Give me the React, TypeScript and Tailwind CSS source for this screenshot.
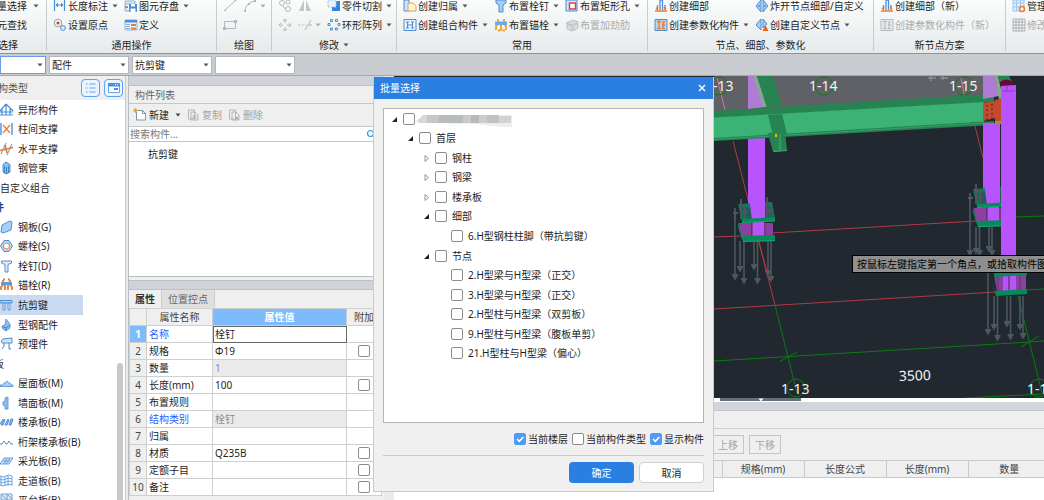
import type { ReactNode } from 'react';

const BLUE = '#4a8fd6';
const ORANGE = '#f0782a';
const GRAY = '#b4b7ba';

function Icon({ children, className = '' }: { children: ReactNode; className?: string }) {
  return (
    <svg viewBox="0 0 14 14" fill="none" className={`size-3.5 shrink-0 ${className}`} aria-hidden="true">
      {children}
    </svg>
  );
}

const icons: Record<string, ReactNode> = {
  length: (
    <>
      <path d="M1.500 0v12M11.500 0v12M3 6h7" stroke={BLUE} strokeWidth="1.200" />
      <path d="M5 3.500 2.500 6 5 8.500zM8 3.500 10.500 6 8 8.500z" fill={BLUE} />
    </>
  ),
  origin: (
    <>
      <circle cx="5" cy="5" r="3.800" stroke="#7d8a96" strokeWidth=".8" />
      <circle cx="5" cy="5" r="1.500" fill="#d33a3a" />
      <circle cx="10" cy="10" r="2.400" stroke={BLUE} fill="#dbeafa" />
    </>
  ),
  save: (
    <>
      <path d="M1 2h10v3H1zM1 5v7h4" stroke="#8fb4dc" fill="#d8e8fa" />
      <path d="M5 5h8v8H5z" fill={BLUE} />
      <path d="M7 5h4v2.500H7zM6.500 9.500h5V13h-5z" fill="#fff" />
      <path d="M1 7h3v2H1z" fill={ORANGE} />
    </>
  ),
  define: (
    <>
      <path d="M1 2h12v10H1z" fill="#e7f0fb" stroke="#8fb4dc" />
      <path d="M1 2h12v2.500H1z" fill={BLUE} />
      <path d="M7 6h5v2H7zM7 9.500h5v2H7z" fill={ORANGE} />
      <path d="M2 6.500h4M2 8.500h4M2 10.500h4" stroke="#8fb4dc" />
    </>
  ),
  line: <path d="M2 11 12 2M1 11.500h2M11.500 1.500h2" stroke={GRAY} />,
  arc: (
    <>
      <path d="M2 12C3 6 6 3 12 2" stroke={GRAY} />
      <path d="M1 11h2v2H1zM5 4h2v2H5zM11 1h2v2h-2z" fill={GRAY} />
    </>
  ),
  rect: (
    <>
      <path d="M1.500 3.500h11v7h-11z" stroke={GRAY} />
      <path d="M11 2h3v3h-3zM0 9h3v3H0z" fill={GRAY} />
    </>
  ),
  copy: (
    <g stroke={GRAY}>
      <circle cx="4" cy="4" r="2.500" />
      <circle cx="10" cy="3" r="2" />
      <circle cx="10" cy="10" r="2.500" />
      <path d="m5 7 2 3" />
    </g>
  ),
  mirror: <path d="M6 1v11H1zM8 1v11h5z" fill="#c3c6c9" />,
  move: (
    <path d="M7 1v4M7 9v4M1 7h4M9 7h4M5 3l2-2 2 2M5 11l2 2 2-2M3 5 1 7l2 2M11 5l2 2-2 2" stroke={GRAY} />
  ),
  trim: <path d="M0 7h2M3.500 7h2M7 7h1M13 2 7 12M10 7h4" stroke={GRAY} />,
  cut: (
    <>
      <path d="M5 2h8v10H5z" fill="#2f86dc" />
      <path d="M1 1h8v7H1z" fill="#eaf3fc" stroke="#9fc4ec" strokeDasharray="2 1" />
    </>
  ),
  array: (
    <g stroke={BLUE}>
      <path d="M3.500 1.500h2v2h-2zM8.500 1.500h2v2h-2zM1 5.500h2v2H1zM11 5.500h2v2h-2zM3.500 10h2v2h-2zM8.500 10h2v2h-2z" />
    </g>
  ),
  belong: (
    <>
      <path d="M1 1h5v11H1z" fill="#cfe2f7" stroke={BLUE} />
      <path d="M5 4h5l3 3v5H5z" fill="#fff3df" stroke="#dba24f" />
    </>
  ),
  combo: (
    <>
      <path d="M1 1.500h12v11H1z" fill="#e9f2fc" stroke={BLUE} />
      <path d="M3 4h3M8 4h3M3 10h3M8 10h3M4.500 4v6M9.500 4v6M4.500 7h5" stroke={BLUE} />
    </>
  ),
  stud: <path d="M2 1h10v3L9 6v7H5V6L2 4z" fill="#a9cbf0" stroke={BLUE} />,
  anchor: (
    <>
      <path d="M4 1v5l-2 2v4M10 1v5l2 2v4M7 7v6M4 12.500h2M8.500 12.500H11" stroke="#f0a020" strokeWidth="1.800" />
      <path d="M1 3.500h12v3.500H1z" fill="#6aa8e8" />
    </>
  ),
  hole: (
    <>
      <path d="M1 1h11v11H1z" fill="#d5e6f8" stroke={BLUE} />
      <path d="M4.500 4h6v6h-6z" fill="#fff" stroke="#d94444" strokeWidth="1.500" />
    </>
  ),
  rib: (
    <path d="m1 5 7-3 5 2-6 3zM2 6l5 2v5l-5-2zM8 8l5-3v5l-5 3z" fill="#d9dbdd" stroke={GRAY} strokeWidth=".8" />
  ),
  detail: (
    <>
      <path d="M3.500 11V6M6 11V1h2.500v10M11 11V6" stroke={BLUE} strokeWidth="1.300" />
      <path d="M1 12h12M2 10l2-2M12 10l-2-2" stroke={ORANGE} strokeWidth="1.600" />
    </>
  ),
  param: (
    <>
      <path d="M1 1.500h12v11H1z" fill="#b7d5f5" stroke={BLUE} />
      <path d="M3 3.500h4M3 10.500h4M5 3.500v7M8 4h3M8 7h3M8 10.500h3M9 4v6" stroke={ORANGE} strokeWidth="1.300" />
    </>
  ),
  paramGray: (
    <>
      <path d="M1 1.500h12v11H1z" fill="#e7e9ea" stroke={GRAY} />
      <path d="M3 3.500h4M3 10.500h4M5 3.500v7M8 4h3M8 7h3M8 10.500h3M9 4v6" stroke={GRAY} />
    </>
  ),
  explode: (
    <>
      <path d="M6 1v12L1 7zM8 1v12l5-6z" fill="#a9cdf2" stroke={BLUE} />
      <path d="M3 7h2M9 7h2" stroke="#2b6cb0" />
    </>
  ),
  customNode: (
    <>
      <path d="M6 1v11L1 7zM8 1v9l4-4z" fill="#a9cdf2" stroke={BLUE} />
      <path d="m10.500 7 3 6h-6z" fill="#f0641e" />
    </>
  ),
  manage: (
    <>
      <path d="M1 1h11v11H1zM1 4h11M1 8h11M4.500 1v11M8.500 1v11" stroke="#9cc3ee" fill="#e1eefb" />
      <circle cx="10" cy="10" r="2.500" stroke={ORANGE} strokeWidth="1.500" fill="#fff" />
    </>
  ),
  grid: <path d="M1 1h12v12H1zM1 4h12M1 7h12M1 10h12M4 1v12M7 1v12M10 1v12" stroke="#9da1a5" strokeWidth=".8" />,
  // component tree
  special: (
    <path d="M6 1v11M6 1 0 8M6 1l7 7M2 6v6M10 6v6M0 12h13M0 9h13" stroke={BLUE} strokeWidth="1.200" />
  ),
  brace: (
    <>
      <path d="M1 1v12M12 1v12" stroke="#7db2ea" strokeWidth="2" />
      <path d="m3 3 7 8M10 3l-7 8" stroke={ORANGE} strokeWidth="1.200" />
    </>
  ),
  hbrace: (
    <>
      <path d="m1 12 5-11M7 13l5-11" stroke="#7db2ea" strokeWidth="1.300" />
      <path d="M0 8.500 13 5.500M5 3l2 8" stroke={ORANGE} strokeWidth="1.700" />
    </>
  ),
  tube: (
    <>
      <path d="M3 3.500 6 1l4 2.500V11l-4 2-3-2z" fill="#8fc0f2" stroke={BLUE} />
      <path d="M6.500 6v7M4.500 5v7M8.500 5v7" stroke="#2f74bf" strokeWidth=".8" />
    </>
  ),
  plate: <path d="m2 5 8-4 2 1-1 8-8 3-2-1z" fill="#a8cff6" stroke={BLUE} />,
  bolt: (
    <>
      <path d="M4 1.500h5L12.500 7 9 12.500H4L.5 7z" fill="#b9d7f6" stroke={BLUE} />
      <circle cx="6.500" cy="7" r="3" fill="#fff" stroke={ORANGE} />
    </>
  ),
  pin: <path d="M1.500 2h10v2L8 5.500V13H5V5.500L1.500 4z" fill="#dceafa" stroke="#5f8fc4" />,
  anchorRed: (
    <>
      <path d="M3 2v5l-2 2v3M10 2v5l2 2v3M5 7v5M8 7v5M3 1.500h2M8 1.500h2" stroke={ORANGE} strokeWidth="1.800" />
      <path d="M1 4h11v3H1z" fill="#5a9be0" />
    </>
  ),
  key: (
    <>
      <path d="M0 2.500h12v2.500H0z" fill="#a8cff6" stroke={BLUE} />
      <path d="M3 5h2v7H3zM8 5h2v7H8z" fill="#cfe3f8" stroke={BLUE} strokeWidth=".8" />
    </>
  ),
  fitting: (
    <>
      <path d="m6 1 4 5v4l-4 3-4-3V8l3-1z" fill="#8fbdf0" stroke={BLUE} strokeWidth=".8" />
      <path d="m3 9 3 1 4-3M6 10v3" stroke="#2f74bf" strokeWidth=".8" />
    </>
  ),
  embed: <path d="m3 2 9-1v5H2L1 4zM4 6v3l-2 3M9 6v6h2" stroke={BLUE} fill="#cfe3f8" />,
  roof: <path d="M0 9h3l1-2h1l2-2 2 2h1l1 2h2v1.500H0z" fill="#a8cff6" stroke={BLUE} strokeWidth=".8" />,
  wall: <path d="M8 1v12H5v-3L3 9V6l2-1V2z" fill="#8fbdf0" stroke={BLUE} strokeWidth=".8" />,
  deck: (
    <path
      d="m1 10 3-6 1 1-2 5zM5 10l3-6 1 1-2 5zM9 10l2-6 2 0-2 6zM0 9l3-5"
      fill="#8fbdf0"
      stroke={BLUE}
    />
  ),
  truss: <path d="M0 9h2l2-3 2 3h1l2-3 2 3h2" stroke={BLUE} />,
  light: <path d="M4 4h9l-4 6H0zM3 7h7M7 4l-3 6M10 4l-4 6" fill="#cfe3f8" stroke={BLUE} strokeWidth=".8" />,
  walk: (
    <path
      d="M0 2q3 2 6 0t6 0M0 5q3 2 6 0t6 0M0 8q3 2 6 0t6 0M0 11q3 2 6 0t6 0M1 2v10M5 3v9M8 2v10M12 2v10"
      stroke="#6ba5e3"
    />
  ),
  platform: (
    <path d="M1 1h11v12H1zM1 7h11M7 1v12M2 2l4 4M8 2l4 4M12 8l-4 4" fill="#dceafa" stroke={BLUE} strokeWidth=".8" />
  ),
};

function Arrow({ className = 'text-[#555]' }: { className?: string }) {
  return (
    <svg viewBox="0 0 6 4" className={`h-1 w-1.5 shrink-0 ${className}`} aria-hidden="true">
      <path d="M0.500 0.500h5L3 3.500z" fill="currentColor" />
    </svg>
  );
}

type ToolProps = { icon?: string; text?: string; arrow?: boolean; disabled?: boolean };

function Tool({ icon, text, arrow, disabled }: ToolProps) {
  return (
    <button
      type="button"
      disabled={disabled}
      aria-label={text ?? icon}
      className="flex h-[19px] items-center gap-px whitespace-nowrap text-[#1e1e1e] disabled:text-[#a9acae]"
    >
      {icon && <Icon>{icons[icon]}</Icon>}
      {text && <span>{text}</span>}
      {arrow && <Arrow className={disabled ? 'ml-0.5 text-[#a9acae]' : 'ml-[3px] text-[#555]'} />}
    </button>
  );
}

type Group = { label: string; width: string; arrow?: boolean; cols: ToolProps[][] };

const groups: Group[] = [
  {
    label: '通用操作',
    width: 'w-[170px]',
    cols: [
      [{ icon: 'length', text: '长度标注', arrow: true }, { icon: 'origin', text: '设置原点' }],
      [{ icon: 'save', text: '图元存盘', arrow: true }, { icon: 'define', text: '定义' }],
    ],
  },
  {
    label: '绘图',
    width: 'w-[55px]',
    cols: [
      [{ icon: 'line', disabled: true }, { icon: 'rect', disabled: true }],
      [{ icon: 'arc', arrow: true, disabled: true }],
    ],
  },
  {
    label: '修改',
    width: 'w-[125px]',
    arrow: true,
    cols: [
      [{ icon: 'copy', disabled: true }, { icon: 'move', disabled: true }],
      [{ icon: 'mirror', disabled: true }, { icon: 'trim', arrow: true, disabled: true }],
      [{ icon: 'cut', text: '零件切割', arrow: true }, { icon: 'array', text: '环形阵列', arrow: true }],
    ],
  },
  {
    label: '常用',
    width: 'w-[251px]',
    cols: [
      [{ icon: 'belong', text: '创建归属', arrow: true }, { icon: 'combo', text: '创建组合构件', arrow: true }],
      [{ icon: 'stud', text: '布置栓钉', arrow: true }, { icon: 'anchor', text: '布置锚栓', arrow: true }],
      [{ icon: 'hole', text: '布置矩形孔', arrow: true }, { icon: 'rib', text: '布置加劲肋', disabled: true }],
    ],
  },
  {
    label: '节点、细部、参数化',
    width: 'w-[226px]',
    cols: [
      [{ icon: 'detail', text: '创建细部' }, { icon: 'param', text: '创建参数化构件', arrow: true }],
      [
        { icon: 'explode', text: '炸开节点细部/自定义' },
        { icon: 'customNode', text: '创建自定义节点', arrow: true },
      ],
    ],
  },
  {
    label: '新节点方案',
    width: 'w-[132px]',
    cols: [
      [
        { icon: 'detail', text: '创建细部（新）' },
        { icon: 'paramGray', text: '创建参数化构件（新）', disabled: true },
      ],
    ],
  },
];

function Ribbon() {
  return (
    <header className="flex h-[54px] shrink-0 overflow-hidden border-b border-[#8f9398] bg-linear-to-b from-[#fbfcfc] to-[#e6eaeb]">
      <section className="-mt-1 mb-0.5 w-[47px] shrink-0 border-r border-[#c9cccf]">
        <div className="flex h-[19px] items-center">
          <button type="button" className="flex w-[27px] justify-end whitespace-nowrap">量选择</button>
          <Arrow className="ml-1.5 text-[#555]" />
        </div>
        <button type="button" className="flex h-[19px] w-[27px] items-center justify-end whitespace-nowrap">
          元查找
        </button>
        <h2 className="flex h-[21px] w-[18px] items-center justify-end whitespace-nowrap">选择</h2>
      </section>
      {groups.map((g) => (
        <section key={g.label} className={`-mt-1 mb-0.5 shrink-0 border-r border-[#c9cccf] ${g.width}`}>
          <div className="flex h-[38px] gap-1.5 pl-1.5">
            {g.cols.map((col, i) => (
              <div key={i} className="flex flex-col items-start">
                {col.map((t, j) => (
                  <Tool key={j} {...t} />
                ))}
              </div>
            ))}
          </div>
          <h2 className="flex h-[21px] items-center justify-center gap-1">
            {g.label}
            {g.arrow && <Arrow />}
          </h2>
        </section>
      ))}
      <section className="-mt-1 min-w-0 flex-1 overflow-hidden pl-1.5">
        <Tool icon="manage" text="管理" />
        <Tool icon="grid" text="修改" disabled />
      </section>
    </header>
  );
}

function Combo({ value, label, className }: { value: string; label: string; className: string }) {
  return (
    <div className={`relative h-[18px] shrink-0 ${className}`}>
      <select
        aria-label={label}
        defaultValue={value}
        className="size-full appearance-none border border-inherit bg-white pl-0.5 text-[10px] leading-4 outline-none"
      >
        <option value={value}>{value}</option>
      </select>
      <span className="pointer-events-none absolute inset-y-0 right-[3px] flex items-center">
        <Arrow />
      </span>
    </div>
  );
}

type TreeItem = { text: string; icon?: string; active?: boolean; className?: string };

const components: TreeItem[] = [
  { icon: 'special', text: '异形构件' },
  { icon: 'brace', text: '柱间支撑' },
  { icon: 'hbrace', text: '水平支撑' },
  { icon: 'tube', text: '钢管束' },
  { text: '自定义组合' },
  { text: '件', className: '-ml-1.5 font-bold text-[#1b4a8f]' },
  { icon: 'plate', text: '钢板(G)' },
  { icon: 'bolt', text: '螺栓(S)' },
  { icon: 'pin', text: '栓钉(D)' },
  { icon: 'anchorRed', text: '锚栓(R)' },
  { icon: 'key', text: '抗剪键', active: true },
  { icon: 'fitting', text: '型钢配件' },
  { icon: 'embed', text: '预埋件' },
  { text: '板', className: '-ml-1.5' },
  { icon: 'roof', text: '屋面板(M)' },
  { icon: 'wall', text: '墙面板(M)' },
  { icon: 'deck', text: '楼承板(B)' },
  { icon: 'truss', text: '桁架楼承板(B)' },
  { icon: 'light', text: '采光板(B)' },
  { icon: 'walk', text: '走道板(B)' },
  { icon: 'platform', text: '平台板(B)' },
];

function Sidebar() {
  return (
    <aside className="flex w-[126px] shrink-0 flex-col overflow-hidden border-r border-[#c4c7cc] bg-white">
      <div className="flex h-6 shrink-0 items-center justify-between bg-[#efefef] pr-0.5">
        <span className="-ml-0.5 text-[#555]">构类型</span>
        <div className="flex gap-1">
          <button type="button" aria-label="列表" className="grid h-[18px] w-[19px] place-items-center rounded-sm border border-[#5da2f2] bg-[#eaf3fe]">
            <Icon>
              <path d="M2 3h1.500M2 7h1.500M2 11h1.500M5.500 3h6M5.500 7h6M5.500 11h6" stroke="#5da2f2" />
            </Icon>
          </button>
          <button type="button" aria-label="面板" className="grid h-[18px] w-[19px] place-items-center rounded-sm border border-[#5da2f2] bg-[#eaf3fe]">
            <Icon>
              <path d="M1.500 2.500h11v9h-11z" fill="#fff" stroke="#4a90e2" strokeWidth=".8" />
              <path d="M1 2h12v3.500H1zM7 7h4v2H7z" fill="#4a90e2" />
              <path d="M8 3.700h1M10 3.700h1" stroke="#fff" />
            </Icon>
          </button>
        </div>
      </div>
      <div className="flex min-h-0 flex-1 overflow-hidden">
        <ul className="grid h-[410px] flex-1 auto-rows-fr">
          {components.map((c) => (
            <li
              key={c.text}
              className={`mr-[42px] flex items-center gap-1 whitespace-nowrap ${c.active ? 'bg-[#c9d9f0]' : ''} ${c.className ?? ''}`}
            >
              {c.icon && <Icon>{icons[c.icon]}</Icon>}
              {c.text}
            </li>
          ))}
        </ul>
        <div className="-ml-2 mr-0.5 mt-[263px] w-1.5 rounded-t-full bg-[#c8c8c8]" />
      </div>
    </aside>
  );
}

function Check({ id, checked, label }: { id: string; checked?: boolean; label?: string }) {
  return (
    <span className="relative grid size-3 shrink-0 place-items-center">
      <input
        id={id}
        type="checkbox"
        defaultChecked={checked}
        aria-label={label}
        className="peer size-3 appearance-none rounded-xs border border-[#8c8c8c] bg-white checked:border-[#4c9bf5] checked:bg-[#4c9bf5]"
      />
      <svg viewBox="0 0 12 12" className="pointer-events-none absolute size-3 opacity-0 peer-checked:opacity-100">
        <path d="m3 6 2.300 2.300L9.300 4" fill="none" stroke="#fff" strokeWidth="1.600" />
      </svg>
    </span>
  );
}

const props = [
  { name: '名称', value: '栓钉', link: true, selected: true },
  { name: '规格', value: 'Φ19', check: true },
  { name: '数量', value: '1', readOnly: true },
  { name: '长度(mm)', value: '100', check: true },
  { name: '布置规则', value: '' },
  { name: '结构类别', value: '栓钉', link: true, readOnly: true },
  { name: '归属', value: '' },
  { name: '材质', value: 'Q235B', check: true },
  { name: '定额子目', value: '', check: true },
  { name: '备注', value: '', check: true },
];

function PropertyTable() {
  return (
    <table className="w-[252px] table-fixed border-collapse bg-white">
      <colgroup>
        <col className="w-[17px]" />
        <col className="w-[66px]" />
        <col className="w-[134px]" />
        <col className="w-[35px]" />
      </colgroup>
      <thead>
        <tr className="h-[17px] text-[#444]">
          <th className="border border-[#cfcfcf] bg-[#efefef] p-0" />
          <th className="border border-[#cfcfcf] bg-[#efefef] p-0 font-normal">属性名称</th>
          <th className="border border-[#cfcfcf] bg-[#7ebbfc] p-0 font-bold text-white">属性值</th>
          <th className="border border-[#cfcfcf] bg-[#efefef] p-0 font-normal">附加</th>
        </tr>
      </thead>
      <tbody>
        {props.map((p, i) => (
          <tr key={p.name} className="h-[17px]">
            <td
              className={`border border-[#cfcfcf] p-0 text-center ${i === 0 ? 'bg-[#7ebbfc] font-bold text-white' : 'bg-[#efefef] text-[#444]'}`}
            >
              {i + 1}
            </td>
            <td className={`whitespace-nowrap border border-[#cfcfcf] p-0 pl-0.5 ${p.link ? 'text-[#1f5eff]' : ''}`}>
              {p.name}
            </td>
            <td
              className={`border border-[#cfcfcf] p-0 pl-0.5 ${p.readOnly ? 'bg-[#eaeaea] text-[#8d8d8d]' : ''} ${p.selected ? 'outline outline-[#666] -outline-offset-1' : ''}`}
            >
              {p.value}
            </td>
            <td className="border border-[#cfcfcf] p-0">
              <div className="flex justify-center">
                {p.check && <Check id={`extra-${i}`} label={`${p.name} 附加`} />}
              </div>
            </td>
          </tr>
        ))}
      </tbody>
    </table>
  );
}

function ComponentPanel() {
  return (
    <div className="ml-0.5 flex w-[256px] shrink-0 flex-col overflow-hidden border-l border-[#b9bcc1] bg-[#efefef]">
      <div className="h-2.5 shrink-0 border-b border-[#bdc0c6] bg-[#d0d2d9]" />
      <h3 className="flex h-[18px] shrink-0 items-center border-b border-[#c6c6c6] pl-1.5 text-[#666]">构件列表</h3>
      <div className="flex h-[23px] shrink-0 items-center border-b border-[#c6c6c6] pl-1">
        <button type="button" className="flex items-center gap-0.5">
          <Icon>
            <path d="M3.500 2.500h6l3 3V12h-9z" fill="#fff" stroke="#6b7b8c" strokeWidth=".8" />
            <path d="M9.500 2.500v3h3" stroke="#6b7b8c" strokeWidth=".8" />
            <path d="M2.500 0v5M0 2.500h5M1 1l3 3M4 1 1 4" stroke="#f5a623" />
          </Icon>
          新建
          <Arrow className="ml-1 text-[#444]" />
        </button>
        <button type="button" disabled className="ml-1.5 flex items-center gap-px text-[#a3a3a3]">
          <Icon>
            <path d="M1.500 2h6v9h-6zM4 4h4l3 3v5H4z" fill="#efefef" stroke="#a8a8a8" strokeWidth=".8" />
            <path d="M5.500 8h4M5.500 10h4" stroke="#a8a8a8" />
          </Icon>
          复制
        </button>
        <button type="button" disabled className="ml-1.5 flex items-center gap-px text-[#a3a3a3]">
          <Icon>
            <path d="M1.500 2h6v9h-6zM4 4h4l3 3v5H4z" fill="#efefef" stroke="#a8a8a8" strokeWidth=".8" />
            <path d="m7 8 4 4M11 8l-4 4" stroke="#a8a8a8" />
          </Icon>
          删除
        </button>
      </div>
      <div className="flex h-[15px] shrink-0 items-center border-b border-[#c6c6c6] bg-white">
        <input
          aria-label="搜索构件"
          placeholder="搜索构件..."
          className="w-[237px] pl-px outline-none placeholder:text-[#777]"
        />
        <svg viewBox="0 0 10 10" className="size-2.5 shrink-0" fill="none" stroke="#2f95d8" strokeWidth="1.200">
          <circle cx="4.500" cy="4.500" r="3" />
          <path d="m7 7 2.500 2.500" />
        </svg>
      </div>
      <ul className="h-[135px] shrink-0 border-b border-[#b9bcc1] bg-white pt-[5px] pl-[19px]">
        <li>抗剪键</li>
      </ul>
      <div className="mt-[3px] h-2.5 shrink-0 border-y border-[#bdc0c6] bg-[#d0d2d9]" />
      <div className="flex h-[18px] shrink-0">
        <button type="button" className="w-8 font-bold text-[#333]">属性</button>
        <button type="button" className="w-[54px] border-x border-[#cfcfcf] bg-[#dfdfdf] text-[#666]">位置控点</button>
      </div>
      <PropertyTable />
    </div>
  );
}

// Vertical rods with a nut at the lower end.
function Rods({ rods }: { rods: number[][] }) {
  return (
    <g stroke="#4d5760">
      {rods.map(([x, y1, y2]) => (
        <g key={x}>
          <path d={`M${x} ${y1}V${y2}`} strokeWidth="1.600" />
          <path d={`M${x - 3} ${y2 - 5}h6M${x - 2} ${y2 - 3}h4`} strokeWidth="1.800" />
        </g>
      ))}
    </g>
  );
}

function Base() {
  return (
    <g>
      <path d="M738 204l34-2 3 16-33 4z" fill="#0b7a56" />
      <path d="M742 208l29-2 2 11-29 3z" fill="#255a5a" />
      <path d="M741 199v20M745 205v14M767 197v20M770 206v13M735 208v10" stroke="#4d5760" strokeWidth="1.800" />
      <path d="M739 205h5M765 203h5M743 212h5M768 211h5M733 213h5" stroke="#4d5760" strokeWidth="2" />
      <path d="M748 190h17v30h-13z" fill="#b854fb" />
      <path d="M739 223h34v15h-32z" fill="#8b419f" />
      <path d="M753 222h11v15h-11z" fill="#b854fb" />
      <path d="M751.500 222v15M765 222v15" stroke="#613073" />
      <path d="M742 219l33-2v4l-33 2zM738 222l4 14 33-1v6l-32 1-5-15z" fill="#068a5a" />
      <path d="M743 241.500l32-1M742 222.500l33-1.500" stroke="#12a870" />
    </g>
  );
}

function Viewport() {
  return (
    <div className="relative h-[322px] shrink-0 overflow-hidden bg-[#212830]">
      <svg viewBox="394 76 650 322" preserveAspectRatio="xMaxYMin slice" className="h-full w-full" role="img" aria-label="三维视图">
        <path d="M714 76h281l-1 22-280 16z" fill="#5f6166" />
        <path d="M717 78l8 32M961 78l4 20" stroke="#c98080" />
        <path d="M733 141l42 164M975 126l8 32M714 237l26-1M772 233l204-12M714 309l282-17" stroke="#b23a40" />
        <path
          d="M775 305l22 88M1018 296l24 97M714 361l316-19M1030 342l14-1M1016 217l28-1M1026 290l18-1M779 362l18-10M1021 347l18-11M965 398l79-4"
          stroke="#0c7a12"
        />
        <g fill="none" stroke="#0c7a12">
          <circle cx="719" cy="86" r="9" />
          <circle cx="824" cy="86" r="9" />
          <circle cx="964" cy="86" r="9" />
          <circle cx="796" cy="388" r="9" />
          <circle cx="1039" cy="388" r="9" />
        </g>
        <path d="M928 78h8M940 78h8M931 76v5M943 76v4" stroke="#8b8d92" strokeWidth="1.500" />

        {/* left column and base */}
        <path d="M748 76h6l11 31-17 2z" fill="#b07bd6" />
        <path d="M748 137h17v70h-17z" fill="#b854fb" />
        <Rods rods={[[735, 213, 280], [740, 241, 272], [744, 241, 284], [754, 241, 270], [757.500, 241, 284], [768, 241, 276], [771, 241, 282]]} />
        <Base />
        <path d="M759 242l9 34" stroke="#b23a40" />

        {/* rear beam */}
        <path d="M753 76h4l10 31h-4z" fill="#8aa595" />
        <path d="M757 76h16l9 29-15 3z" fill="#278352" />

        {/* main beam */}
        <path d="M714 111l280-17v8l-280 16z" fill="#278352" />
        <path d="M714 117.500L984 102v20l-270 17z" fill="#3ab374" />
        <path d="M714 138l280-17v4l-280 16z" fill="#278352" />
        <path d="M714 139.500l270-16.500" stroke="#3ab374" strokeWidth=".6" />
        <path d="M768 115l14-1 5 20-14 1zM768 133l17-1 2 18-14 2z" fill="#278352" />
        <path d="M780 134v17M774 151.500l13-1" stroke="#3ab374" />
        <path d="M775 134h2v3h-2z" fill="#d8c800" />

        {/* right columns */}
        <path d="M983 76h11l5 20-16 3z" fill="#b07bd6" />
        <path d="M994 76h4l5 22-4 1z" fill="#8aa595" />
        <path d="M998 76h11l4 8-10 12z" fill="#278352" />
        <path d="M983 123h17v70h-17z" fill="#b854fb" />
        <Rods rods={[[970, 198, 256], [976, 227, 254], [979.500, 227, 256], [989, 227, 252], [992, 227, 256]]} />
        <g transform="translate(235 -15)">
          <Base />
        </g>
        <path d="M983 103l12-2v17l-12 3zM995 100l8-2v23l-8 1z" fill="#c44a2f" />
        <path d="M995 121h8v3h-8z" fill="#a39a00" />
        <path d="M987 105v16M992 104v16" stroke="#4b2a28" strokeWidth="1.500" strokeDasharray="1.500 3" />
        <path d="M1001 86l15-1v173h-15z" fill="#b854fb" />
        <path d="M1000 82q6-5 13 0v3l-13 1z" fill="#660a3c" />
        <path d="M1007 86v5M1002 91h13" stroke="#8a3bc4" />

        {/* front base */}
        <Rods rods={[[988, 272, 335], [994, 296, 330], [997.500, 296, 341], [1007, 296, 327], [1010.500, 296, 340], [1020, 296, 330], [1023, 296, 339]]} />
        <path d="M994 274h32v18h-29z" fill="#8b419f" />
        <path d="M1003 274h13v18h-13z" fill="#b854fb" />
        <path d="M998 274v18M1009 274v18M1020 274v18" stroke="#6b3780" strokeWidth="1.500" />
        <path d="M994 273l33-1v3l-33 2zM991 279l4 12 32-2v5l-31 2z" fill="#068a5a" />

        <g fill="#f4f4f4" className="font-['Noto_Sans','Noto_Sans_CJK_SC',sans-serif] text-[14px]">
          <text x="705" y="91">1-13</text>
          <text x="809" y="91">1-14</text>
          <text x="949" y="91">1-15</text>
          <text x="781" y="394">1-13</text>
          <text x="1027" y="394">1-14</text>
          <text x="899" y="381" transform="rotate(-2 899 381)">3500</text>
        </g>
      </svg>
      <div
        role="tooltip"
        className="absolute top-[179px] right-0 h-[18px] w-48 overflow-hidden whitespace-nowrap border border-r-0 border-black bg-[#8f8f8f] pl-1 leading-4 text-black"
      >
        按鼠标左键指定第一个角点，或拾取构件图
      </div>
    </div>
  );
}

function Workspace() {
  return (
    <div className="ml-2.5 flex min-w-0 flex-1 flex-col overflow-hidden bg-[#efefef]">
      <Viewport />
      <div className="flex h-1 shrink-0 justify-end bg-white">
        <div className="mr-[243px] flex h-[3px] w-[81px] items-center justify-center bg-[#67717e]">
          <Arrow className="text-white" />
        </div>
      </div>
      <div className="h-[9px] shrink-0 border-b border-[#c3c5cb] bg-[#d3d5dc]" />
      <div className="h-[18px] shrink-0 border-b border-[#cfcfcf]" />
      <div className="flex h-[31px] shrink-0 items-center justify-end gap-[5px] pr-[263px] text-[#a6a6a6]">
        <button type="button" disabled className="h-[19px] w-8 border border-[#c4c4c4]">上移</button>
        <button type="button" disabled className="h-[19px] w-8 border border-[#c4c4c4]">下移</button>
      </div>
      <div className="flex min-h-0 flex-1 justify-end bg-white">
        <table className="h-[18px] w-full table-fixed border-collapse self-start">
          <thead>
            <tr className="h-[17px] bg-[#efefef] text-[#444]">
              <th className="border border-[#c9c9c9] p-0" />
              <th className="w-[82px] border border-[#c9c9c9] p-0 font-normal">规格(mm)</th>
              <th className="w-[82px] border border-[#c9c9c9] p-0 font-normal">长度公式</th>
              <th className="w-[82px] border border-[#c9c9c9] p-0 font-normal">长度(mm)</th>
              <th className="w-[76px] border border-r-0 border-[#c9c9c9] p-0 pl-1.5 font-normal">数量</th>
            </tr>
          </thead>
        </table>
      </div>
    </div>
  );
}

type Node = { text: string; level: string; state: 'open' | 'closed' | 'leaf' };

const nodes: Node[] = [
  { text: '', level: 'pl-1.5', state: 'open' },
  { text: '首层', level: 'pl-[22px]', state: 'open' },
  { text: '钢柱', level: 'pl-[38px]', state: 'closed' },
  { text: '钢梁', level: 'pl-[38px]', state: 'closed' },
  { text: '楼承板', level: 'pl-[38px]', state: 'closed' },
  { text: '细部', level: 'pl-[38px]', state: 'open' },
  { text: '6.H型钢柱柱脚（带抗剪键）', level: 'pl-[54px]', state: 'leaf' },
  { text: '节点', level: 'pl-[38px]', state: 'open' },
  { text: '2.H型梁与H型梁（正交）', level: 'pl-[54px]', state: 'leaf' },
  { text: '3.H型梁与H型梁（正交）', level: 'pl-[54px]', state: 'leaf' },
  { text: '2.H型柱与H型梁（双剪板）', level: 'pl-[54px]', state: 'leaf' },
  { text: '9.H型柱与H型梁（腹板单剪）', level: 'pl-[54px]', state: 'leaf' },
  { text: '21.H型柱与H型梁（偏心）', level: 'pl-[54px]', state: 'leaf' },
];

function Expander({ state }: { state: Node['state'] }) {
  return (
    <svg viewBox="0 0 8 8" className="mr-[5px] size-2 shrink-0" aria-hidden="true">
      {state === 'open' && <path d="M7 2v5H2z" fill="#222" />}
      {state === 'closed' && <path d="M3 1.500v6L6.500 4.500z" fill="#fff" stroke="#888" strokeWidth=".9" />}
    </svg>
  );
}

function RedactedName() {
  return (
    <svg viewBox="0 0 98 16" className="h-4 w-[98px]" aria-hidden="true">
      <path d="M1 10 9 4h88v13L60 13 2 12z" fill="#eceeee" />
      <path d="M3 9 8 4h4v8H4z" fill="#d6d7d8" />
      <path d="M12 4h12v8H12z" fill="#c6c6c8" />
      <path d="M24 4h24v8H24z" fill="#b9bcbd" />
      <path d="M48 4h8v8h-8z" fill="#c9cacb" />
      <path d="M56 4h8v8h-8z" fill="#b6b8ba" />
      <path d="M64 4h8v8h-8z" fill="#cbcdcd" />
      <path d="M72 4h12v8H72z" fill="#bfc1c3" />
      <path d="M84 5h12v7H84z" fill="#d0d2d3" />
    </svg>
  );
}

function BatchSelectDialog() {
  return (
    <div
      role="dialog"
      aria-labelledby="dialog-title"
      className="absolute top-[77px] left-[373px] w-[341px] border border-t-0 border-[#c5cadb] bg-[#f0f0f0] pb-2"
    >
      <div className="flex h-[22px] items-center justify-between bg-[#2b7fe1] pr-[7px] pl-1.5 text-white">
        <h2 id="dialog-title">批量选择</h2>
        <button type="button" aria-label="关闭">
          <svg viewBox="0 0 8 8" className="size-2" fill="none" stroke="#fff" strokeWidth="1.400">
            <path d="m1 1 6 6M7 1 1 7" />
          </svg>
        </button>
      </div>
      <div className="px-[9px] pt-[9px]">
        <div className="h-[315px] border border-[#b5b5b5] bg-white">
          <ul className="grid h-[254px] auto-rows-fr">
            {nodes.map((n, i) => (
              <li key={i} className={`flex items-center whitespace-nowrap ${n.level}`}>
                <Expander state={n.state} />
                <Check id={`node-${i}`} label={n.text ? undefined : '工程'} />
                {n.text ? (
                  <label htmlFor={`node-${i}`} className="ml-[5px]">{n.text}</label>
                ) : (
                  <RedactedName />
                )}
              </li>
            ))}
          </ul>
        </div>
        <div className="flex h-[33px] items-center justify-end gap-1 border-b border-[#c9c9c9]">
          <div className="flex items-center gap-0.5">
            <Check id="cur-floor" checked />
            <label htmlFor="cur-floor">当前楼层</label>
          </div>
          <div className="flex items-center gap-0.5">
            <Check id="cur-type" />
            <label htmlFor="cur-type">当前构件类型</label>
          </div>
          <div className="flex items-center gap-0.5">
            <Check id="show" checked />
            <label htmlFor="show">显示构件</label>
          </div>
        </div>
        <div className="mt-1.5 flex justify-end gap-[5px]">
          <button type="button" className="h-[21px] w-[65px] rounded-sm bg-[#2b7fe1] text-white">确定</button>
          <button type="button" className="h-[21px] w-[65px] rounded-sm border border-[#cfcfcf] bg-white">取消</button>
        </div>
      </div>
    </div>
  );
}

export default function App() {
  return (
    <div className="relative flex h-screen flex-col overflow-hidden bg-[#e9eaec] font-['Noto_Sans','Noto_Sans_CJK_SC',sans-serif] text-[10px] leading-[14px] text-[#1e1e1e]">
      <Ribbon />
      <div className="flex h-[22px] shrink-0 items-center gap-[3px] border-b border-[#a4a7ac] bg-[#c9ccd1]">
        <Combo label="楼层" value="" className="w-[46px] border-[#6a9be8]" />
        <Combo label="类别" value="配件" className="w-20 border-[#b4b7bc]" />
        <Combo label="构件" value="抗剪键" className="w-20 border-[#b4b7bc]" />
        <Combo label="分组" value="" className="w-20 border-[#b4b7bc]" />
      </div>
      <main className="flex min-h-0 flex-1">
        <Sidebar />
        <ComponentPanel />
        <Workspace />
      </main>
      <BatchSelectDialog />
    </div>
  );
}
